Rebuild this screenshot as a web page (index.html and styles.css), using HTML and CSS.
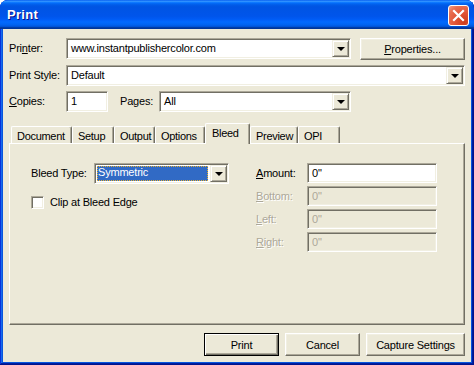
FILE: index.html
```html
<!DOCTYPE html>
<html>
<head>
<meta charset="utf-8">
<title>Print</title>
<link rel="stylesheet" href="styles.css">
</head>
<body>
<div class="window">
  <div class="titlebar">
    <span class="title">Print</span>
    <span class="close">
      <svg width="21" height="21" viewBox="0 0 21 21"><path d="M6 6 L15 15 M15 6 L6 15" stroke="#fff" stroke-width="2.2" stroke-linecap="square" fill="none"/></svg>
    </span>
  </div>
  <div class="client">
    <div class="row row1">
      <span class="lbl lbl-main">Pri<u>n</u>ter:</span>
      <div class="combo combo-printer"><span class="ctext">www.instantpublishercolor.com</span><span class="drop"><i class="tri"></i></span></div>
      <button class="btn btn-props"><u>P</u>roperties...</button>
    </div>
    <div class="row row2">
      <span class="lbl lbl-main">Print Style:</span>
      <div class="combo combo-style"><span class="ctext">Default</span><span class="drop"><i class="tri"></i></span></div>
    </div>
    <div class="row row3">
      <span class="lbl lbl-main"><u>C</u>opies:</span>
      <div class="field copies"><span class="ftext">1</span></div>
      <span class="lbl lbl-pages">Pa<u>g</u>es:</span>
      <div class="combo combo-pages"><span class="ctext">All</span><span class="drop"><i class="tri"></i></span></div>
    </div>
    <div class="tabs">
      <span class="tab t-doc">Document</span>
      <span class="tab t-setup">Setup</span>
      <span class="tab t-output">Output</span>
      <span class="tab t-options">Options</span>
      <span class="tab t-bleed active">Bleed</span>
      <span class="tab t-preview">Preview</span>
      <span class="tab t-opi">OPI</span>
    </div>
    <div class="panel">
      <div class="col-left">
        <div class="prow">
          <span class="lbl lbl-bleed">Bleed Type:</span>
          <div class="combo combo-bleed"><span class="ctext sel"><span class="seltext">Symmetric</span></span><span class="drop"><i class="tri"></i></span></div>
        </div>
        <div class="check"><span class="box"></span><span class="clabel">Clip at Bleed Edge</span></div>
      </div>
      <div class="col-right">
        <div class="frow"><span class="lbl lbl-amt"><u>A</u>mount:</span><div class="field amt"><span class="ftext">0"</span></div></div>
        <div class="frow"><span class="lbl lbl-amt dis"><u>B</u>ottom:</span><div class="field amt disabled"><span class="ftext">0"</span></div></div>
        <div class="frow"><span class="lbl lbl-amt dis"><u>L</u>eft:</span><div class="field amt disabled"><span class="ftext">0"</span></div></div>
        <div class="frow"><span class="lbl lbl-amt dis"><u>R</u>ight:</span><div class="field amt disabled"><span class="ftext">0"</span></div></div>
      </div>
    </div>
    <div class="footer">
      <button class="btn btn-default btn-print">Print</button>
      <button class="btn btn-cancel">Cancel</button>
      <button class="btn btn-capture">Capture Settings</button>
    </div>
  </div>
</div>
</body>
</html>
```
FILE: styles.css
```css
* { box-sizing: border-box; }
html, body { margin: 0; padding: 0; }
body {
  width: 474px;
  height: 365px;
  background: #ffffff;
  font-family: "Liberation Sans", Arial, sans-serif;
  font-size: 11px;
  letter-spacing: -0.2px;
  color: #000;
  overflow: hidden;
}
u { text-decoration: underline; text-underline-offset: 1px; }

.window {
  width: 474px;
  height: 365px;
  background: #0855dd;
  border-radius: 8px 8px 0 0;
  padding: 0 3px 3px 3px;
  display: flex;
  flex-direction: column;
  box-shadow: inset -1px -1px #00138c, inset 1px 1px #0831d9, inset -2px -2px #001ea0, inset 2px 2px #166aee;
}

.titlebar {
  height: 29px;
  margin: 0 -3px;
  border-radius: 8px 8px 0 0;
  background: linear-gradient(180deg, #0058ee 0%, #3593ff 4%, #288eff 6%, #127dff 8%, #036ffc 10%, #0262ee 14%, #0057e5 20%, #0054e3 24%, #0055eb 56%, #005bf5 66%, #026afe 76%, #0062ef 86%, #0052d6 92%, #0040ab 94%, #003092 100%);
  display: flex;
  align-items: flex-start;
  padding: 0 5px 0 7px;
}
.title {
  margin-top: 7px;
  font-family: "Liberation Sans", Arial, sans-serif;
  font-weight: bold;
  font-size: 13px;
  line-height: 15px;
  color: #fff;
  text-shadow: 1px 1px #0f1089;
  letter-spacing: 0.3px;
}
.close {
  margin-left: auto;
  margin-top: 5px;
  width: 21px;
  height: 21px;
  border: 1px solid #fff;
  border-radius: 3px;
  background: radial-gradient(circle at 80% 85%, #cc3d1c 0%, #e05436 40%, #e96e50 75%, #f4a088 100%);
  display: flex;
}
.close svg { display: block; margin: -1px; }

.client {
  flex: 1;
  background: #ece9d8;
  padding: 9px 6px 6px 6px;
  display: flex;
  flex-direction: column;
}

.row { display: flex; align-items: center; height: 21px; }
.row1 { margin-bottom: 6px; }
.row2 { margin-bottom: 5px; }

.lbl { white-space: nowrap; line-height: 13px; }
.lbl-main { width: 57px; }
.lbl-pages { width: 39px; margin-left: 12px; }

/* sunken field */
.combo, .field, .box {
  border: 1px solid;
  border-color: #aca899 #ffffff #ffffff #aca899;
  box-shadow: inset 1px 1px #716f64, inset -1px -1px #f1efe2;
  background: #fff;
}
.combo {
  height: 21px;
  display: flex;
  align-items: stretch;
  padding: 1px;
}
.ctext {
  flex: 1;
  padding-left: 3px;
  line-height: 17px;
  white-space: nowrap;
  overflow: hidden;
}
.drop {
  width: 17px;
  height: 17px;
  background: #ece9d8;
  border: 1px solid;
  border-color: #f1efe2 #716f64 #716f64 #f1efe2;
  box-shadow: inset 1px 1px #fff, inset -1px -1px #aca899;
  display: flex;
  align-items: center;
  justify-content: center;
}
.tri {
  width: 0;
  height: 0;
  border-left: 4px solid transparent;
  border-right: 4px solid transparent;
  border-top: 4px solid #000;
  margin-top: 1px;
}
.combo-printer { width: 285px; }
.combo-style { width: 399px; }
.combo-pages { width: 192px; }
.combo-bleed { width: 135px; }

.field {
  height: 21px;
  padding: 2px 2px 2px 4px;
  display: flex;
  align-items: center;
}
.ftext { line-height: 15px; }
.copies { width: 42px; }

.btn {
  font-family: "Liberation Sans", Arial, sans-serif;
  font-size: 11px;
  letter-spacing: -0.2px;
  color: #000;
  background: #ece9d8;
  border: 1px solid;
  border-color: #fff #716f64 #716f64 #fff;
  box-shadow: inset -1px -1px #aca899, inset 1px 1px #f1efe2;
  padding: 0;
  margin: 0;
  border-radius: 0;
}
.btn-props { width: 105px; height: 22px; margin-left: 9px; }

.tabs {
  margin-top: 11px;
  height: 20px;
  display: flex;
  align-items: flex-end;
  padding-left: 2px;
}
.tab {
  height: 17px;
  background: #ece9d8;
  border-top: 1px solid #fff;
  border-left: 1px solid #fff;
  border-right: 1px solid #716f64;
  box-shadow: inset -1px 0 #aca899;
  border-radius: 2px 2px 0 0;
  text-align: left;
  line-height: 14px;
  padding: 2px 0 0 5px;
  letter-spacing: -0.3px;
  white-space: nowrap;
  overflow: hidden;
}
.tab.active {
  height: 21px;
  margin-bottom: -1px;
  position: relative;
  z-index: 1;
  padding-top: 2px;
  padding-left: 6px;
}
.t-doc { width: 61px; }
.t-setup { width: 42px; }
.t-output { width: 41px; }
.t-options { width: 50px; }
.t-bleed { width: 45px; }
.t-preview { width: 48px; }
.t-opi { width: 42px; }

.panel {
  width: 456px;
  height: 182px;
  border: 1px solid;
  border-color: #fff #716f64 #716f64 #fff;
  box-shadow: inset -1px -1px #aca899;
  padding: 19px 0 0 21px;
  display: flex;
  align-items: flex-start;
}
.col-left { width: 198px; display: flex; flex-direction: column; }
.prow { display: flex; align-items: center; height: 21px; }
.lbl-bleed { width: 63px; }
.sel {
  padding: 1px 2px 1px 1px;
}
.seltext {
  display: block;
  height: 15px;
  background: #316ac5;
  color: #fff;
  line-height: 13px;
  padding-left: 1px;
  outline: 1px dotted #e8b030;
  outline-offset: -1px;
}
.check {
  margin-top: 12px;
  display: flex;
  align-items: center;
  height: 13px;
}
.box { width: 13px; height: 13px; display: block; }
.clabel { margin-left: 6px; line-height: 13px; }

.col-right {
  margin-left: 27px;
  display: flex;
  flex-direction: column;
  gap: 3px;
}
.frow { display: flex; align-items: center; height: 20px; }
.lbl-amt { width: 51px; }
.field.amt { width: 130px; height: 20px; }
.field.disabled { background: #ece9d8; color: #aca899; }
.dis { color: #aca899; text-shadow: 1px 1px #fff; }

.footer {
  margin-top: 8px;
  display: flex;
  justify-content: flex-end;
  gap: 6px;
}
.footer .btn { height: 23px; }
.btn-print { width: 75px; }
.btn-cancel { width: 75px; }
.btn-capture { width: 99px; }
.btn-default {
  border: 1px solid #000;
  box-shadow: inset 1px 1px #fff, inset -1px -1px #716f64, inset -2px -2px #aca899;
}
```
